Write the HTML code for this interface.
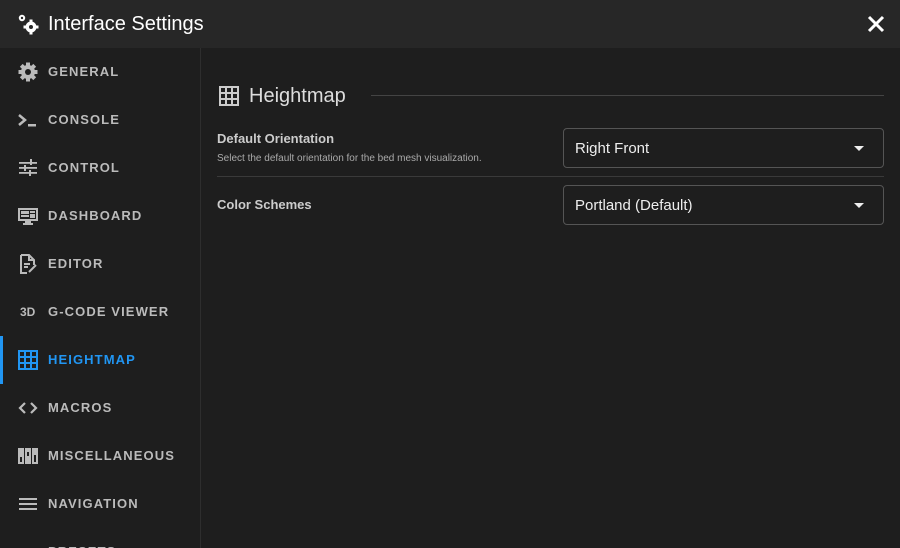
<!DOCTYPE html>
<html style="width:900px;height:548px;overflow:hidden"><head><style>
*{margin:0;padding:0;box-sizing:border-box}
body{width:900px;height:548px;overflow:hidden;background:#1e1e1e;font-family:"Liberation Sans",sans-serif;color:#fff;position:relative}
.hdr{position:absolute;left:0;top:0;width:900px;height:48px;background:#272727}
.hdr .t{position:absolute;left:48px;top:13px;font-size:20px;color:#fff}
.side{position:absolute;left:0;top:48px;width:201px;height:500px;border-right:1px solid #2e2e2e;overflow:hidden}
.it{position:absolute;left:0;width:200px;height:48px}
.it span{position:absolute;left:48px;top:16px;font-size:13px;font-weight:bold;letter-spacing:1.1px;color:#bbb}
.it svg{position:absolute;left:18px;top:14px}
.act span{color:#2196f3}
.bar{position:absolute;left:0;top:0;width:3px;height:48px;background:#2196f3}
.lbl{position:absolute;left:217px;font-size:13px;font-weight:bold;color:#ccc}
.sel{position:absolute;left:563px;width:321px;height:40px;border:1px solid #555;border-radius:4px}
.sel span{position:absolute;left:11px;top:11px;font-size:15px;color:#eee}
.sel i{position:absolute;right:19px;top:17px;border-left:5px solid transparent;border-right:5px solid transparent;border-top:5px solid #eee}
</style></head><body>
<div class="hdr">
<svg style="position:absolute;left:17px;top:13px" width="22" height="22" viewBox="0 0 22 22" fill="#fff"><circle cx="5" cy="5" r="3.2"/><circle cx="5" cy="5" r="1.2" fill="#272727"/><circle cx="14" cy="14" r="5.5"/><circle cx="14" cy="14" r="2" fill="#272727"/><rect x="12.5" y="6.5" width="3" height="3"/><rect x="12.5" y="18.5" width="3" height="3"/><rect x="6.5" y="12.5" width="3" height="3"/><rect x="18.5" y="12.5" width="3" height="3"/></svg>
<div class="t">Interface Settings</div>
<svg style="position:absolute;left:867px;top:15px" width="18" height="18" viewBox="0 0 18 18"><path d="M2 2L16 16M16 2L2 16" stroke="#fff" stroke-width="3"/></svg>
</div>
<div class="side">
<div class="it" style="top:0"><svg width="20" height="20" viewBox="0 0 20 20" fill="#bbb"><circle cx="10" cy="10" r="7"/><rect x="8" y="0.5" width="4" height="19"/><rect x="0.5" y="8" width="19" height="4"/><rect x="8" y="0.5" width="4" height="19" transform="rotate(45 10 10)"/><rect x="8" y="0.5" width="4" height="19" transform="rotate(-45 10 10)"/><circle cx="10" cy="10" r="3" fill="#1e1e1e"/></svg><span>GENERAL</span></div>
<div class="it" style="top:48px"><svg width="20" height="20" viewBox="0 0 20 20"><path d="M1 5L7 10L1 15" stroke="#bbb" stroke-width="2.5" fill="none"/><rect x="10" y="14" width="8" height="2.5" fill="#bbb"/></svg><span>CONSOLE</span></div>
<div class="it" style="top:96px"><svg width="20" height="20" viewBox="0 0 20 20" fill="#bbb"><rect x="1" y="4" width="18" height="1.8"/><rect x="1" y="9" width="18" height="1.8"/><rect x="1" y="14" width="18" height="1.8"/><rect x="12" y="1" width="2" height="6"/><rect x="6" y="7" width="2" height="6"/><rect x="11" y="12" width="2" height="6"/></svg><span>CONTROL</span></div>
<div class="it" style="top:144px"><svg width="20" height="20" viewBox="0 0 20 20" fill="#bbb"><path d="M0 2h20v13H0zM2 4v9h16V4z"/><rect x="3" y="5" width="8" height="3"/><rect x="12" y="5" width="5" height="2"/><rect x="3" y="9" width="8" height="2"/><rect x="12" y="8" width="5" height="4"/><rect x="7" y="15" width="6" height="2"/><rect x="5" y="17" width="10" height="2"/></svg><span>DASHBOARD</span></div>
<div class="it" style="top:192px"><svg width="20" height="20" viewBox="0 0 20 20"><path d="M3 1h8l5 5v5M11 1v5h5M9 19H3V1" stroke="#bbb" stroke-width="2" fill="none"/><path d="M6 10h6M6 13h4M11 18l7-7" stroke="#bbb" stroke-width="2"/></svg><span>EDITOR</span></div>
<div class="it" style="top:240px"><b style="position:absolute;left:20px;top:17px;font-size:12px;color:#bbb">3D</b><span>G-CODE VIEWER</span></div>
<div class="it act" style="top:288px"><div class="bar"></div><svg width="20" height="20" viewBox="0 0 20 20"><path d="M1 1h18v18H1zM1 7h18M1 13h18M7 1v18M13 1v18" stroke="#2196f3" stroke-width="2" fill="none"/></svg><span>HEIGHTMAP</span></div>
<div class="it" style="top:336px"><svg width="20" height="20" viewBox="0 0 20 20"><path d="M7 5L2 10L7 15M13 5L18 10L13 15" stroke="#bbb" stroke-width="2.2" fill="none"/></svg><span>MACROS</span></div>
<div class="it" style="top:384px"><svg width="20" height="20" viewBox="0 0 20 20" fill="#bbb"><rect x="0" y="2" width="6" height="16"/><rect x="7" y="2" width="6" height="16"/><rect x="14" y="2" width="6" height="16"/><rect x="2" y="11" width="2" height="5" fill="#1e1e1e"/><rect x="9" y="6" width="2" height="4" fill="#1e1e1e"/><rect x="16" y="9" width="2" height="7" fill="#1e1e1e"/></svg><span>MISCELLANEOUS</span></div>
<div class="it" style="top:432px"><svg width="20" height="20" viewBox="0 0 20 20" fill="#bbb"><rect x="1" y="4" width="18" height="2"/><rect x="1" y="9" width="18" height="2"/><rect x="1" y="14" width="18" height="2"/></svg><span>NAVIGATION</span></div>
<div class="it" style="top:480px;height:20px;overflow:hidden"><span>PRESETS</span></div>
</div>
<svg style="position:absolute;left:219px;top:86px" width="20" height="20" viewBox="0 0 20 20"><path d="M1 1h18v18H1zM1 7h18M1 13h18M7 1v18M13 1v18" stroke="#ccc" stroke-width="2" fill="none"/></svg>
<div style="position:absolute;left:249px;top:85px;font-size:20px;color:#ddd">Heightmap</div>
<div style="position:absolute;left:371px;top:95px;width:513px;height:1px;background:#444"></div>
<div class="lbl" style="top:131px">Default Orientation</div>
<div style="position:absolute;left:217px;top:153px;font-size:10px;color:#aaa">Select the default orientation for the bed mesh visualization.</div>
<div class="sel" style="top:128px"><span>Right Front</span><i></i></div>
<div style="position:absolute;left:217px;top:176px;width:667px;height:1px;background:#3a3a3a"></div>
<div class="lbl" style="top:197px">Color Schemes</div>
<div class="sel" style="top:185px"><span>Portland (Default)</span><i></i></div>
</body></html>
